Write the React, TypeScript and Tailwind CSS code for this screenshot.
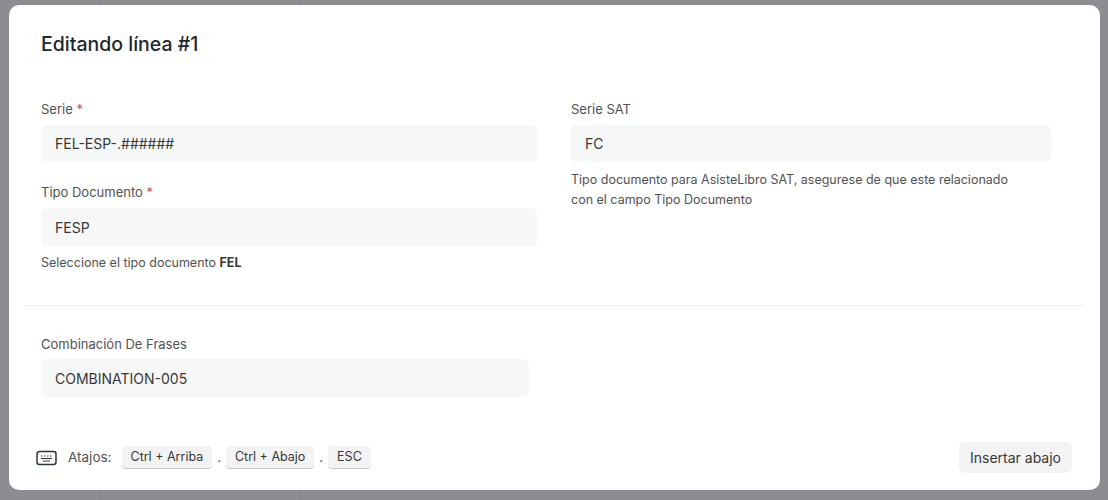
export default function App() {
  const font = { fontFamily: "Inter, 'Liberation Sans', sans-serif" };
  return (
    <div className="w-[1108px] h-[500px] bg-[#8b8d91] relative overflow-hidden" style={font}>
      <div className="absolute left-[100px] top-0 h-full w-px bg-[#7f8185]" />
      <div className="absolute left-[300px] top-0 h-full w-px bg-[#7f8185]" />
      <div className="absolute left-[9px] top-[5px] w-[1091px] h-[485px] bg-white rounded-[10px] flex flex-col">
        <div className="px-[32px] pt-[27px] text-[19.5px] font-medium text-[#1f272e] leading-[24px]">Editando línea #1</div>
        <div className="px-[32px] mt-[45px] grid grid-cols-[496px_480px] gap-x-[34px]">
          <div className="flex flex-col">
            <div className="text-[13px] text-[#525252] leading-[16px]">Serie <span className="text-[#e24c4c]">*</span></div>
            <div className="mt-[8px] h-[37px] rounded-[6px] bg-[#f6f7f7] px-[14px] flex items-center text-[14px] text-[#383838]">FEL-ESP-.######</div>
            <div className="mt-[22px] text-[13px] text-[#525252] leading-[16px]">Tipo Documento <span className="text-[#e24c4c]">*</span></div>
            <div className="mt-[8px] h-[38px] rounded-[6px] bg-[#f6f7f7] px-[14px] flex items-center text-[14px] text-[#383838]">FESP</div>
            <div className="mt-[9px] text-[12.5px] text-[#525252] leading-[16px]">Seleccione el tipo documento <b className="text-[#383838]">FEL</b></div>
          </div>
          <div className="flex flex-col">
            <div className="text-[13px] text-[#525252] leading-[16px]">Serie SAT</div>
            <div className="mt-[8px] h-[37px] rounded-[6px] bg-[#f6f7f7] px-[14px] flex items-center text-[14px] text-[#383838]">FC</div>
            <div className="mt-[8px] text-[12.5px] text-[#525252] leading-[20px]">Tipo documento para AsisteLibro SAT, asegurese de que este relacionado<br />con el campo Tipo Documento</div>
          </div>
        </div>
        <div className="mx-[15px] mt-[34px] h-px bg-[#eeeff0]" />
        <div className="px-[32px] mt-[30px]">
          <div className="text-[13px] text-[#525252] leading-[16px]">Combinación De Frases</div>
          <div className="mt-[7px] w-[488px] h-[38px] rounded-[6px] bg-[#f6f7f7] px-[14px] flex items-center text-[14px] text-[#383838]">COMBINATION-005</div>
        </div>
        <div className="mt-auto mb-[17px] pl-[27px] pr-[28px] flex items-center justify-between">
          <div className="flex items-center text-[13px] text-[#525252]">
            <svg width="22" height="16" viewBox="0 0 22 16" className="mr-[10px]">
              <rect x="1" y="1.5" width="19" height="13" rx="2.5" fill="none" stroke="#2b3640" strokeWidth="1.5" />
              <path d="M5 6h1.5M8 6h1.5M11 6h1.5M14 6h1.5M5 8.5h11M7 11h7" stroke="#2b3640" strokeWidth="1" />
            </svg>
            <span className="mr-[10px] text-[13.5px]">Atajos:</span>
            {["Ctrl + Arriba", "Ctrl + Abajo", "ESC"].map((k, i) => (
              <span key={k} className="flex items-center">
                {i > 0 && <span className="mx-[5px]">.</span>}
                <span className="px-[9px] h-[23px] flex items-center rounded-[4px] bg-[#f3f3f3] border-b border-[#c7c9cc] text-[12.5px] text-[#383838]">{k}</span>
              </span>
            ))}
          </div>
          <div className="h-[31px] px-[11px] rounded-[6px] bg-[#f3f3f3] flex items-center text-[14px] text-[#383838]">Insertar abajo</div>
        </div>
      </div>
    </div>
  );
}
